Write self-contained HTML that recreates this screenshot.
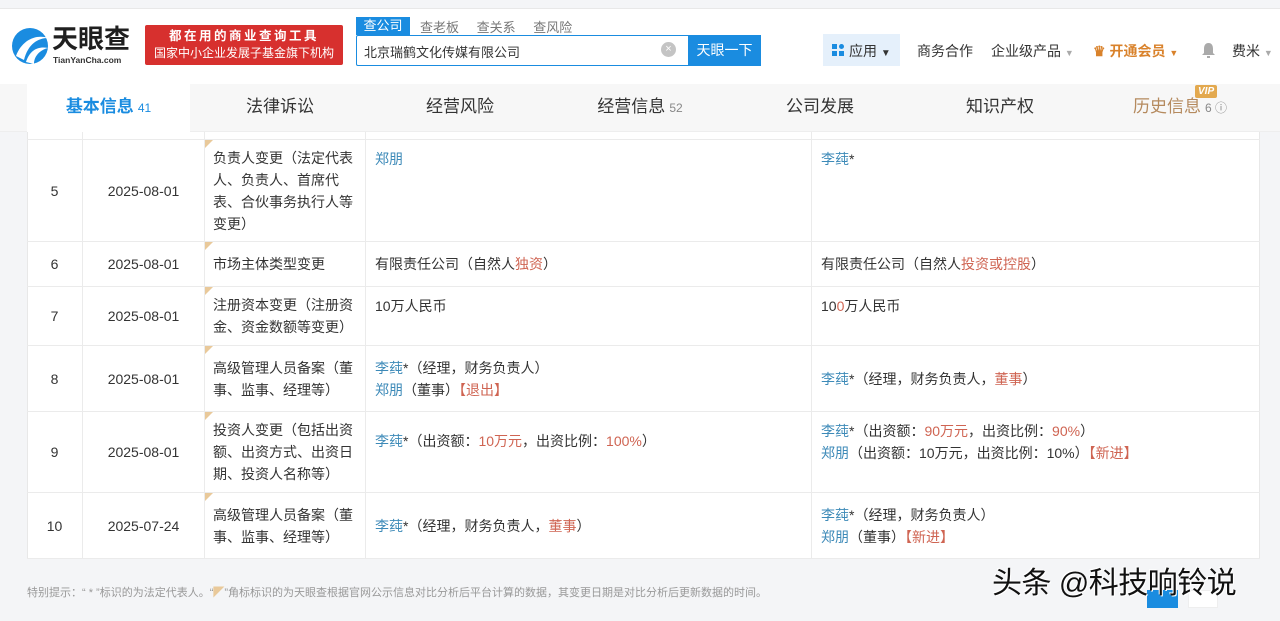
<!DOCTYPE html>
<html><head><meta charset="utf-8"><style>
*{margin:0;padding:0;box-sizing:border-box}
body{width:1280px;height:621px;overflow:hidden;background:#f4f5f7;font-family:"Liberation Sans","Noto Sans CJK SC",sans-serif;font-size:14px;color:#333;position:relative}
.abs{position:absolute}
.hdr{left:0;top:8px;width:1280px;height:76px;background:#fff;border-top:1px solid #e8e8e8}
.bl{color:#3d8ab8}.rd{color:#cf6452}
.tabs{left:0;top:84px;width:1280px;height:48px;background:#f7f7f7;border-bottom:1px solid #eee}
.tab{position:absolute;top:0;height:48px;line-height:46px;font-size:17px;color:#333;text-align:center}
.tab sup{font-size:12px;color:#888;vertical-align:baseline;margin-left:4px}
.wrap{left:27px;top:132px;width:1233px;height:427px;background:#fff;border:1px solid #e8e8e8;border-top:none}
.r{position:absolute;left:27px;width:1233px;border-bottom:1px solid #ebebeb}
.c{position:absolute;top:0;height:100%;border-right:1px solid #ebebeb}
.num{left:0;width:56px;display:flex;align-items:center;justify-content:center}
.dt{left:56px;width:122px;display:flex;align-items:center;justify-content:center}
.ty{left:178px;width:161px;padding:8px 8px;line-height:22px;display:flex;align-items:center}
.ty:before{content:"";position:absolute;left:0;top:0;border-top:8px solid #e9c99a;border-right:8px solid transparent}
.b{left:339px;width:446px;padding:8px 9px;line-height:22px}
.a{left:785px;width:448px;padding:8px 9px;line-height:22px;border-right:none}
.mid{display:flex;flex-direction:column;justify-content:center}
.nav{font-size:14px;top:41px}
</style></head><body>
<div class="abs hdr"></div>
<svg class="abs" style="left:10px;top:26px" width="40" height="40" viewBox="0 0 40 40"><circle cx="20" cy="20" r="18" fill="#1a8ce0"/><path d="M6 30 C12 14 26 8 38 12 C28 12 18 18 14 34Z" fill="#fff"/><path d="M16 36 C20 24 28 20 38 22 C30 24 24 30 24 38Z" fill="#fff"/></svg>
<div class="abs" style="left:52px;top:24px;font-size:26px;line-height:30px;font-weight:bold;color:#1f1f1f">天眼查</div>
<div class="abs" style="left:53px;top:55px;font-size:8.5px;line-height:10px;color:#333;font-weight:bold">TianYanCha.com</div>
<div class="abs" style="left:145px;top:25px;width:198px;height:40px;background:#d7302e;border-radius:2px;color:#fff;text-align:center;font-size:12.5px;line-height:17px;padding-top:3px"><div style="letter-spacing:2.5px;font-weight:bold">都在用的商业查询工具</div><div style="font-size:12px">国家中小企业发展子基金旗下机构</div></div>
<div class="abs" style="left:356px;top:17px;width:54px;height:18px;background:#1a8ce0;color:#fff;font-size:13px;text-align:center;line-height:18px">查公司</div>
<div class="abs" style="left:420px;top:17px;font-size:13px;color:#777;word-spacing:14px">查老板 查关系 查风险</div>
<div class="abs" style="left:356px;top:35px;width:405px;height:31px;border:1px solid #1a8ce0;border-radius:2px;background:#fff"></div>
<div class="abs" style="left:364px;top:42px;font-size:13px">北京瑞鹤文化传媒有限公司</div>
<div class="abs" style="left:661px;top:42px;width:15px;height:15px;border-radius:50%;background:#c4c4c4;color:#fff;font-size:11px;text-align:center;line-height:15px">×</div>
<div class="abs" style="left:688px;top:35px;width:73px;height:31px;background:#1a8ce0;color:#fff;font-size:14px;text-align:center;line-height:31px">天眼一下</div>
<div class="abs" style="left:823px;top:34px;width:77px;height:32px;background:#e5f0fb"></div>
<svg class="abs" style="left:832px;top:44px" width="12" height="12"><rect x="0" y="0" width="5" height="5" fill="#1a8ce0"/><circle cx="9.5" cy="2.5" r="2.5" fill="#1a8ce0"/><rect x="0" y="7" width="5" height="5" fill="#1a8ce0"/><rect x="7" y="7" width="5" height="5" fill="#1a8ce0"/></svg>
<div class="abs nav" style="left:849px">应用 <span style="font-size:10px">▼</span></div>
<div class="abs nav" style="left:917px">商务合作</div>
<div class="abs nav" style="left:991px">企业级产品 <span style="color:#aaa;font-size:9px">▼</span></div>
<div class="abs nav" style="left:1093px;color:#d9822b;font-weight:bold">♛ 开通会员 <span style="font-size:9px">▼</span></div>
<svg class="abs" style="left:1201px;top:42px" width="15" height="16" viewBox="0 0 15 16"><path d="M7.5 1 C4 1 3 4 3 7 L3 11 L1 13 L14 13 L12 11 L12 7 C12 4 11 1 7.5 1Z" fill="#aaa"/><rect x="6" y="14" width="3" height="2" fill="#aaa"/></svg>
<div class="abs nav" style="left:1232px">费米 <span style="color:#aaa;font-size:9px">▼</span></div>
<div class="abs tabs">
<div class="tab" style="left:27px;width:163px;background:#fff;color:#1a8ce0;font-weight:bold">基本信息<sup style="color:#1a8ce0;font-weight:normal">41</sup></div>
<div class="tab" style="left:200px;width:160px">法律诉讼</div>
<div class="tab" style="left:380px;width:160px">经营风险</div>
<div class="tab" style="left:560px;width:160px">经营信息<sup>52</sup></div>
<div class="tab" style="left:740px;width:160px">公司发展</div>
<div class="tab" style="left:920px;width:160px">知识产权</div>
<div class="tab" style="left:1100px;width:160px;color:#b58a5e">历史信息<sup>6 ⓘ</sup></div>
<div class="abs" style="left:1195px;top:1px;background:#e3a94f;color:#fff;font-size:10px;font-weight:bold;font-style:italic;padding:0 3px;line-height:13px;border-radius:2px">VIP</div>
</div>
<div class="abs wrap"></div>
<div class="r" style="top:132px;height:8px"><div class="c num"></div><div class="c dt"></div><div class="c" style="left:178px;width:161px"></div><div class="c" style="left:339px;width:446px"></div></div>
<div class="r" style="top:140px;height:102px"><div class="c num">5</div><div class="c dt">2025-08-01</div><div class="c ty">负责人变更（法定代表人、负责人、首席代表、合伙事务执行人等变更）</div><div class="c b"><span class="bl">郑朋</span></div><div class="c a"><span class="bl">李莼</span>*</div></div>
<div class="r" style="top:242px;height:45px"><div class="c num">6</div><div class="c dt">2025-08-01</div><div class="c ty">市场主体类型变更</div><div class="c b mid"><div>有限责任公司（自然人<span class="rd">独资</span>）</div></div><div class="c a mid"><div>有限责任公司（自然人<span class="rd">投资或控股</span>）</div></div></div>
<div class="r" style="top:287px;height:59px"><div class="c num">7</div><div class="c dt">2025-08-01</div><div class="c ty">注册资本变更（注册资金、资金数额等变更）</div><div class="c b">10万人民币</div><div class="c a">10<span class="rd">0</span>万人民币</div></div>
<div class="r" style="top:346px;height:66px"><div class="c num">8</div><div class="c dt">2025-08-01</div><div class="c ty">高级管理人员备案（董事、监事、经理等）</div><div class="c b mid"><div><span class="bl">李莼</span>*（经理，财务负责人）</div><div><span class="bl">郑朋</span>（董事）<span class="rd">【退出】</span></div></div><div class="c a mid"><div><span class="bl">李莼</span>*（经理，财务负责人，<span class="rd">董事</span>）</div></div></div>
<div class="r" style="top:412px;height:81px"><div class="c num">9</div><div class="c dt">2025-08-01</div><div class="c ty">投资人变更（包括出资额、出资方式、出资日期、投资人名称等）</div><div class="c b"><div style="margin-top:10px"><span class="bl">李莼</span>*（出资额：<span class="rd">10万元</span>，出资比例：<span class="rd">100%</span>）</div></div><div class="c a"><div><span class="bl">李莼</span>*（出资额：<span class="rd">90万元</span>，出资比例：<span class="rd">90%</span>）</div><div><span class="bl">郑朋</span>（出资额：10万元，出资比例：10%）<span class="rd">【新进】</span></div></div></div>
<div class="r" style="top:493px;height:66px"><div class="c num">10</div><div class="c dt">2025-07-24</div><div class="c ty">高级管理人员备案（董事、监事、经理等）</div><div class="c b mid"><div><span class="bl">李莼</span>*（经理，财务负责人，<span class="rd">董事</span>）</div></div><div class="c a mid"><div><span class="bl">李莼</span>*（经理，财务负责人）</div><div><span class="bl">郑朋</span>（董事）<span class="rd">【新进】</span></div></div></div>
<div class="abs" style="left:27px;top:584px;font-size:11px;color:#999">特别提示：“ * ”标识的为法定代表人。“<span style="color:#e9c99a">◤</span>”角标标识的为天眼查根据官网公示信息对比分析后平台计算的数据，其变更日期是对比分析后更新数据的时间。</div>
<div class="abs" style="left:1147px;top:590px;width:31px;height:18px;background:#1a8ce0"></div>
<div class="abs" style="left:1188px;top:590px;width:30px;height:18px;background:#fff;border:1px solid #eee"></div>
<div class="abs" style="left:992px;top:564px;font-size:30px;line-height:40px;color:#111;letter-spacing:-0.5px;text-shadow:1px 1px 0 #fff,-1px -1px 0 #fff">头条 @科技响铃说</div>
</body></html>
